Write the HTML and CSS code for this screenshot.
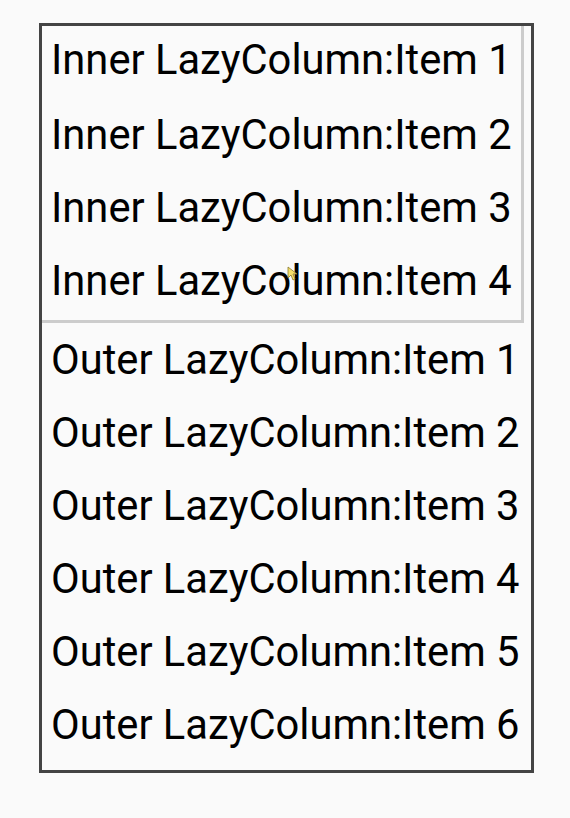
FILE: index.html
```html
<!DOCTYPE html>
<html>
<head>
    <title>Nested LazyColumn</title>
    <link rel="stylesheet" href="styles.css">
</head>
<body>
    <div class="outer">
        <div class="inner">
            <div class="item">Inner LazyColumn:Item 1</div>
            <div class="item">Inner LazyColumn:Item 2</div>
            <div class="item">Inner LazyColumn:Item 3</div>
            <div class="item">Inner LazyColumn:Item 4</div>
        </div>
        <div class="item">Outer LazyColumn:Item 1</div>
        <div class="item">Outer LazyColumn:Item 2</div>
        <div class="item">Outer LazyColumn:Item 3</div>
        <div class="item">Outer LazyColumn:Item 4</div>
        <div class="item">Outer LazyColumn:Item 5</div>
        <div class="item">Outer LazyColumn:Item 6</div>
    </div>

    <!-- pointer left over the list -->
    <svg class="cursor" width="12" height="16" viewBox="0 0 12 16">
        <path d="M1 1 L1 12 L4 9 L6 14 L8 13 L6 8 L10 8 Z" fill="#f4e06a" stroke="#8a7a2a" stroke-width="0.8"/>
    </svg>
</body>
</html>
```

FILE: styles.css
```css
body {
    background-color: #fafafa;
    font-family: Roboto, "Liberation Sans", sans-serif;
    margin: 0;
    padding: 23px 0 0 39px;
    position: relative;
}

.outer {
    width: 489px;
    height: 744px;
    border: 3px solid #444444;
    background-color: #fafafa;
}

.inner {
    width: 479px;
    border-right: 3px solid #cccccc;
    border-bottom: 3px solid #cccccc;
}

.item {
    height: 73px;
    line-height: 73px;
    padding-left: 9px;
    font-size: 41.7px;
    color: #000000;
    white-space: nowrap;
}

.inner .item {
    line-height: 67px;
}

.inner .item:first-child {
    height: 75px;
}

.cursor {
    position: absolute;
    left: 287px;
    top: 266px;
}
```
